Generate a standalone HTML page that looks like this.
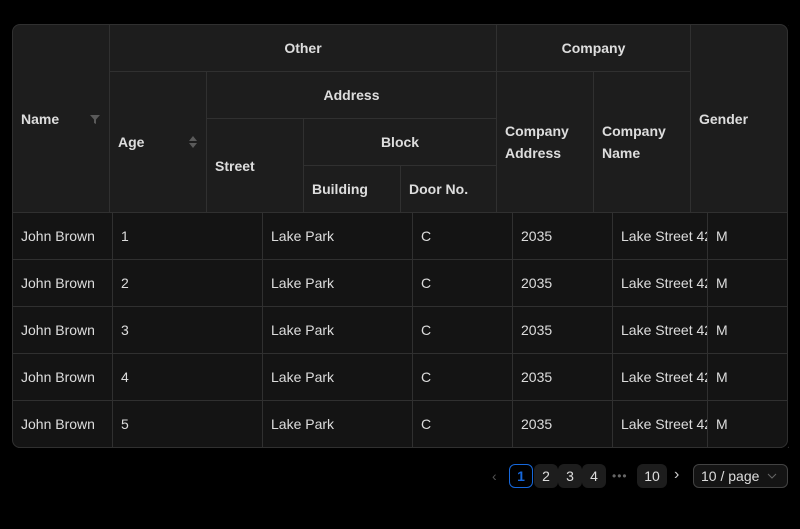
<!DOCTYPE html>
<html><head><style>
body{margin:0;background:#000;width:800px;height:528px;overflow:hidden;font-family:"Liberation Sans",sans-serif;font-size:14px;color:rgba(255,255,255,0.85);position:relative}
.c{position:absolute;box-sizing:border-box;border-right:1px solid #303030;border-bottom:1px solid #303030;display:flex;align-items:center;padding:0 8px;overflow:hidden;white-space:nowrap}
.h{background:#1d1d1d;font-weight:bold;line-height:22px}
.ctr{justify-content:center}
.b{background:#141414}
.wrap{position:absolute;left:12px;top:24px;width:776px;height:424px;border:1px solid #303030;border-radius:8px;box-sizing:border-box;z-index:5;box-shadow:0 0 0 3px #000}
.pg{position:absolute;top:464px;height:24px;min-width:24px;border-radius:6px;background:#1d1d1d;display:flex;align-items:center;justify-content:center;font-size:14px;box-sizing:border-box}
#t{position:absolute;left:1px;top:1px;width:800px;height:528px}
</style></head><body>
<div id="t">
<div class="c h" style="left:12px;top:24px;width:97px;height:188px;justify-content:space-between">Name<svg width="12" height="12" viewBox="0 0 12 12"><path d="M1 2h10L7 6.5V11L5 10V6.5z" fill="#5a5a5a"/></svg></div>
<div class="c h ctr" style="left:109px;top:24px;width:387px;height:47px">Other</div>
<div class="c h ctr" style="left:496px;top:24px;width:194px;height:47px">Company</div>
<div class="c h" style="left:690px;top:24px;width:98px;height:188px">Gender</div>
<div class="c h" style="left:109px;top:71px;width:97px;height:141px;justify-content:space-between">Age<svg width="10" height="16" viewBox="0 0 10 16"><path d="M5 2L9 7H1z M5 14L9 9H1z" fill="#5a5a5a"/></svg></div>
<div class="c h ctr" style="left:206px;top:71px;width:290px;height:47px">Address</div>
<div class="c h" style="left:496px;top:71px;width:97px;height:141px">Company<br>Address</div>
<div class="c h" style="left:593px;top:71px;width:97px;height:141px">Company<br>Name</div>
<div class="c h" style="left:206px;top:118px;width:97px;height:94px">Street</div>
<div class="c h ctr" style="left:303px;top:118px;width:193px;height:47px">Block</div>
<div class="c h" style="left:303px;top:165px;width:97px;height:47px">Building</div>
<div class="c h" style="left:400px;top:165px;width:96px;height:47px">Door No.</div>
<div id="rows"></div>
</div>
<div class="wrap"></div>
<script>
var xs=[12,112,262,412,512,612,707,788];
var h='';
for(var r=0;r<5;r++){var y=212+r*47;var v=['John Brown',String(r+1),'Lake Park','C','2035','Lake Street 42','M'];
for(var i=0;i<7;i++){h+='<div class="c b" style="left:'+xs[i]+'px;top:'+y+'px;width:'+(xs[i+1]-xs[i])+'px;height:47px;">'+v[i]+'</div>';}}
document.getElementById('rows').innerHTML=h;
</script>
<div style="position:absolute;left:492px;top:468px;color:#555;font-size:14px">&#8249;</div>
<div class="pg" style="left:509px;border:1px solid #1668dc;background:#000;color:#1668dc;font-weight:bold">1</div>
<div class="pg" style="left:534px">2</div>
<div class="pg" style="left:558px">3</div>
<div class="pg" style="left:582px">4</div>
<div style="position:absolute;left:612px;top:469px;color:#666;font-size:12px;letter-spacing:1px">•••</div>
<div class="pg" style="left:637px;width:30px">10</div>
<div style="position:absolute;left:674px;top:466px;color:#ccc;font-size:16px">&#8250;</div>
<div class="pg" style="left:693px;width:95px;background:#141414;border:1px solid #424242;justify-content:flex-start;padding-left:7px">10 / page<svg style="position:absolute;right:10px" width="10" height="6" viewBox="0 0 10 6"><path d="M1 1l4 4 4-4" stroke="#666" fill="none"/></svg></div>
</body></html>
